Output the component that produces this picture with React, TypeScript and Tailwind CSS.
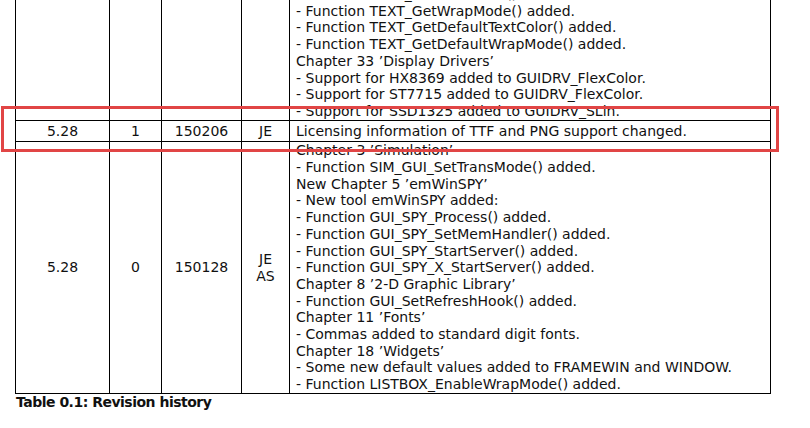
const topLines = [
  "- Function TEXT_GetNumLines() added.",
  "- Function TEXT_GetWrapMode() added.",
  "- Function TEXT_GetDefaultTextColor() added.",
  "- Function TEXT_GetDefaultWrapMode() added.",
  "Chapter 33 \u2019Display Drivers\u2019",
  "- Support for HX8369 added to GUIDRV_FlexColor.",
  "- Support for ST7715 added to GUIDRV_FlexColor.",
  "- Support for SSD1325 added to GUIDRV_SLin.",
];

const lastLines = [
  "Chapter 3 \u2019Simulation\u2019",
  "- Function SIM_GUI_SetTransMode() added.",
  "New Chapter 5 \u2019emWinSPY\u2019",
  "- New tool emWinSPY added:",
  "- Function GUI_SPY_Process() added.",
  "- Function GUI_SPY_SetMemHandler() added.",
  "- Function GUI_SPY_StartServer() added.",
  "- Function GUI_SPY_X_StartServer() added.",
  "Chapter 8 \u20192-D Graphic Library\u2019",
  "- Function GUI_SetRefreshHook() added.",
  "Chapter 11 \u2019Fonts\u2019",
  "- Commas added to standard digit fonts.",
  "Chapter 18 \u2019Widgets\u2019",
  "- Some new default values added to FRAMEWIN and WINDOW.",
  "- Function LISTBOX_EnableWrapMode() added.",
];

const cell = "border border-black text-center align-middle p-0";

export default function App() {
  return (
    <div className="relative w-[810px] h-[428px] overflow-hidden bg-white text-[#111] font-['DejaVu_Sans',Verdana,sans-serif] text-[14px] leading-[16.7px]">
      <table className="ml-[15px] -mt-[15px] w-[756px] table-fixed border-collapse">
        <colgroup>
          <col className="w-[94px]" />
          <col className="w-[52px]" />
          <col className="w-[80px]" />
          <col className="w-[48px]" />
          <col />
        </colgroup>
        <tbody>
          <tr>
            <td className={cell} />
            <td className={cell} />
            <td className={cell} />
            <td className={cell} />
            <td className="border border-black px-[6px] py-0 align-top">
              {topLines.map((l) => (
                <div key={l} className="whitespace-nowrap">{l}</div>
              ))}
            </td>
          </tr>
          <tr>
            <td className={cell}>5.28</td>
            <td className={cell}>1</td>
            <td className={cell}>150206</td>
            <td className={cell}>JE</td>
            <td className="border border-black px-[6px] py-[2px] whitespace-nowrap">
              Licensing information of TTF and PNG support changed.
            </td>
          </tr>
          <tr>
            <td className={cell}>5.28</td>
            <td className={cell}>0</td>
            <td className={cell}>150128</td>
            <td className={cell}>
              JE
              <br />
              AS
            </td>
            <td className="border border-black px-[6px] py-0 align-top">
              {lastLines.map((l) => (
                <div key={l} className="whitespace-nowrap">{l}</div>
              ))}
            </td>
          </tr>
        </tbody>
      </table>
      <p className="ml-[16px] font-bold text-[14px] leading-[17px] tracking-[-0.5px]">
        Table 0.1: Revision history
      </p>

      {/* red highlight box */}
      <div className="absolute left-[1px] top-[106px] w-[778px] h-[46px] border-[3px] border-[#e14545]" />
    </div>
  );
}
